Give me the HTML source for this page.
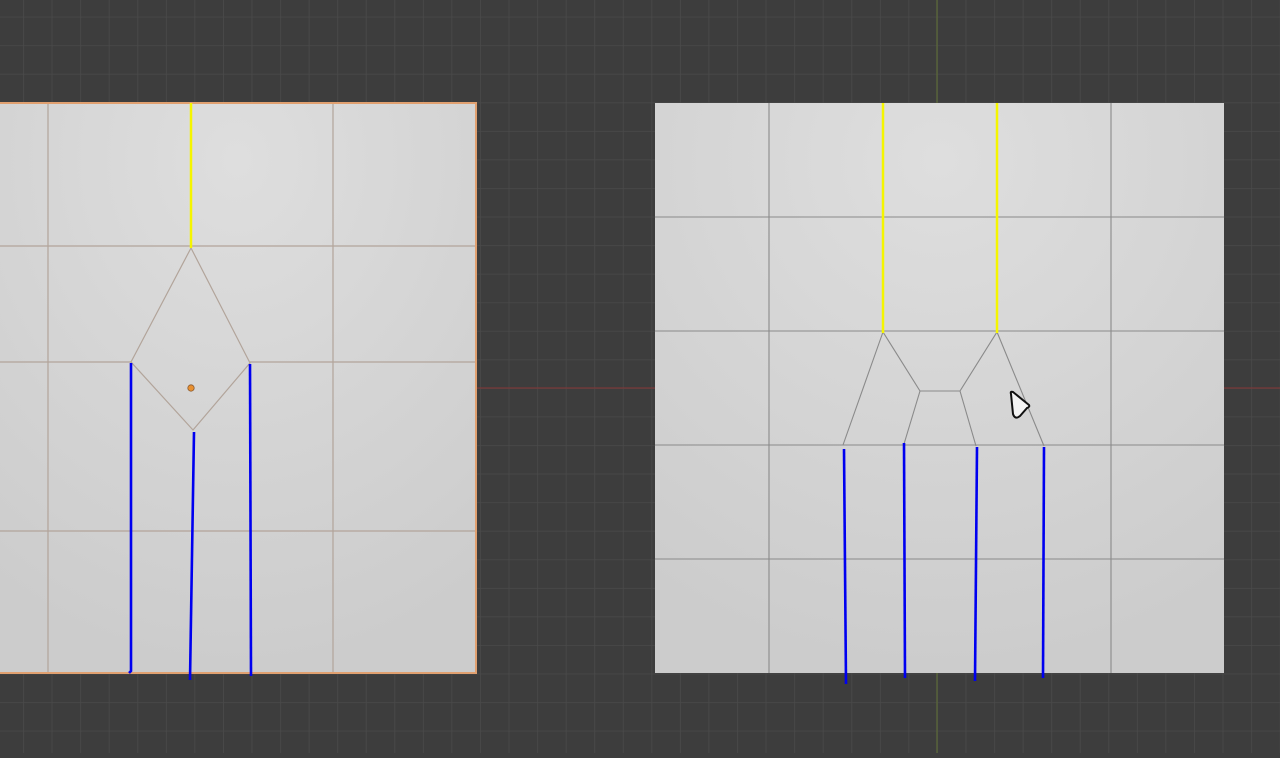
<!DOCTYPE html>
<html><head><style>html,body{margin:0;padding:0;background:#3d3d3d;overflow:hidden}</style></head>
<body>
<svg width="1280" height="753" xmlns="http://www.w3.org/2000/svg">
<defs>
<pattern id="g" x="23.08" y="16.7" width="28.56" height="28.56" patternUnits="userSpaceOnUse">
<path d="M0 0V28.56M0 0H28.56" stroke="#4a4a4a" stroke-width="1.6" fill="none"/>
</pattern>
<radialGradient id="sh" cx="0.5" cy="0.1" r="0.9">
<stop offset="0" stop-color="#dedede"/><stop offset="1" stop-color="#cccccc"/>
</radialGradient>
</defs>
<rect width="1280" height="753" fill="#3d3d3d"/>
<rect width="1280" height="753" fill="url(#g)"/>
<line x1="937" y1="0" x2="937" y2="753" stroke="#5c6a38" stroke-width="1.2"/>
<line x1="0" y1="388" x2="1280" y2="388" stroke="#7a3a3a" stroke-width="1.2"/>
<rect x="-2" y="103" width="478" height="570" fill="url(#sh)" stroke="#e0a070" stroke-width="2"/>
<g stroke="#b2a49a" stroke-width="1.2" fill="none">
<line x1="48" y1="104" x2="48" y2="672"/>
<line x1="333" y1="104" x2="333" y2="672"/>
<line x1="0" y1="246" x2="475" y2="246"/>
<line x1="0" y1="362" x2="131" y2="362"/>
<line x1="250" y1="362" x2="475" y2="362"/>
<line x1="0" y1="531" x2="475" y2="531"/>
<path d="M191 248L131 362L193 430L250 363Z"/>
</g>
<line x1="191" y1="103" x2="191" y2="248" stroke="#f5f500" stroke-width="2.5"/>
<g stroke="#0000f0" stroke-width="2.6" fill="none">
<path d="M131 363V671L129 673"/>
<line x1="194" y1="432" x2="190" y2="680"/>
<line x1="250" y1="364" x2="251" y2="676"/>
</g>
<circle cx="191" cy="388" r="3.2" fill="#e89030" stroke="#8a5a30" stroke-width="0.8"/>
<rect x="655" y="103" width="569" height="570" fill="url(#sh)"/>
<g stroke="#8a8a8a" stroke-width="1.1" fill="none">
<line x1="769" y1="103" x2="769" y2="673"/>
<line x1="883" y1="217" x2="883" y2="332"/>
<line x1="997" y1="217" x2="997" y2="332"/>
<line x1="1111" y1="103" x2="1111" y2="673"/>
<line x1="655" y1="217" x2="1224" y2="217"/>
<line x1="655" y1="331" x2="1224" y2="331"/>
<line x1="655" y1="445" x2="1224" y2="445"/>
<line x1="655" y1="559" x2="1224" y2="559"/>
<path d="M883 332L843 445M883 332L920 391H960L997 332L1044 446M920 391L904 444M960 391L976 446"/>
</g>
<g stroke="#f5f500" stroke-width="2.5">
<line x1="883" y1="103" x2="883" y2="333"/>
<line x1="997" y1="103" x2="997" y2="333"/>
</g>
<g stroke="#0000f0" stroke-width="2.6">
<line x1="844" y1="449" x2="846" y2="684"/>
<line x1="904" y1="443" x2="905" y2="678"/>
<line x1="977" y1="447" x2="975" y2="681"/>
<line x1="1044" y1="447" x2="1043" y2="678"/>
</g>
<path d="M1011 394Q1010 391 1013 392L1029 405Q1030 407 1027 408L1020 416Q1015 420 1013 414Z" fill="#f4f4f4" stroke="#111" stroke-width="2" stroke-linejoin="round"/>
</svg>
</body></html>
